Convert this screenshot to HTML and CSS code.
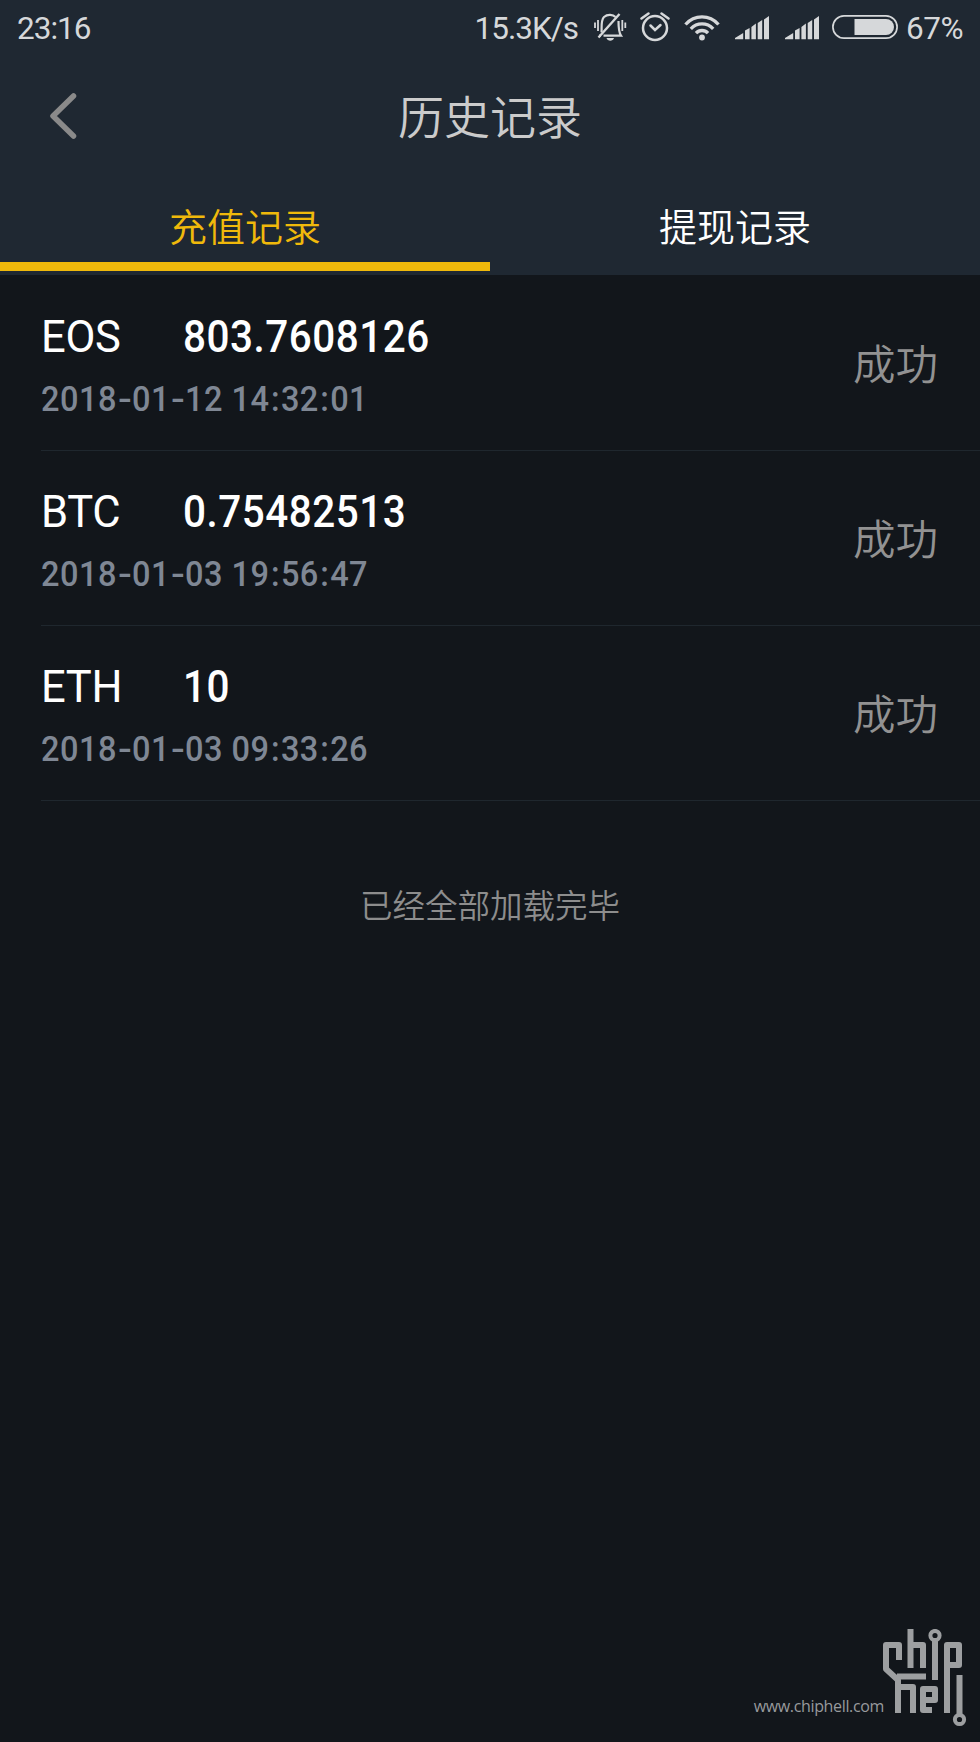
FILE: index.html
```html
<!DOCTYPE html>
<html lang="zh-CN">
<head>
<meta charset="utf-8">
<title>历史记录</title>
<link rel="stylesheet" href="styles.css">
</head>
<body>
<div class="screen">
  <header class="top">
    <div class="status">
      <span class="clock">23:16</span>
      <span class="speed">15.3K/s</span>
      <svg class="ic-bell" width="34" height="30" viewBox="0 0 34 30" fill="none" stroke="#d6d8da" stroke-width="2.200">
        <path d="M8.500 20.500C9 17 7.500 8.500 11 5C14.500 2 20 2.500 22.500 5"/>
        <path d="M25.500 9C25.500 15 25.500 20 28 23.600H10.500"/>
        <path d="M6 23.600H8"/>
        <path d="M5.500 25.500L26.500 2" stroke-width="2.400"/>
        <path d="M13.500 26H21C20 29.500 14.500 29.500 13.500 26Z" fill="#d6d8da" stroke="none"/>
        <path d="M2 10.500V16M5 8V19M29.300 8V19M32.300 10.500V16" stroke-width="1.800"/>
      </svg>
      <svg class="ic-alarm" width="30" height="30" viewBox="0 0 30 30" fill="none" stroke="#d6d8da" stroke-width="2.500" stroke-linecap="round">
        <circle cx="15" cy="16" r="12"/>
        <path d="M1.500 6.500L8.500 1.500M21.500 1.500L28.500 6.500"/>
        <path d="M10.500 13.500L15 18L20.500 13" stroke-width="2.500"/>
      </svg>
      <svg class="ic-wifi" width="36" height="28" viewBox="0 0 36 28" fill="none" stroke="#d6d8da" stroke-width="3.300">
        <path d="M1.500 10.500C10.500 .4 25.500 .4 34.500 10.500"/>
        <path d="M6.800 14.800C13 8.300 23 8.300 29.200 14.800"/>
        <path d="M12 19.200C15.300 15.600 20.700 15.600 24 19.200"/>
        <circle cx="18" cy="23.500" r="2.900" fill="#d6d8da" stroke="none"/>
      </svg>
      <svg class="ic-signal" width="35" height="24" viewBox="0 0 35 24" fill="#d6d8da">
        <path d="M0 23.200V22L8.200 17V23.200ZM10 23.200V14.500L14.600 12V23.200ZM16.400 23.200V11L20.900 7.500V23.200ZM22.700 23.200V7L27.200 4V23.200ZM29 23.200V3.500L34 0V23.200Z"/>
      </svg>
      <svg class="ic-signal" width="35" height="24" viewBox="0 0 35 24" fill="#d6d8da">
        <path d="M0 23.200V22L8.200 17V23.200ZM10 23.200V14.500L14.600 12V23.200ZM16.400 23.200V11L20.900 7.500V23.200ZM22.700 23.200V7L27.200 4V23.200ZM29 23.200V3.500L34 0V23.200Z"/>
      </svg>
      <svg class="ic-battery" width="66" height="24" viewBox="0 0 66 24">
        <rect x=".9" y=".9" width="64.200" height="22.200" rx="11.100" fill="none" stroke="#d6d8da" stroke-width="1.700"/>
        <path d="M22.500 4H54A8 8 0 0 1 54 20H22.500Z" fill="#d6d8da"/>
      </svg>
      <span class="percent">67%</span>
    </div>
    <div class="titlebar">
      <svg class="back" width="28" height="48" viewBox="0 0 28 48" fill="none" stroke="#8a8a8a" stroke-width="5.500" stroke-linecap="round" stroke-linejoin="round"><path d="M24.500 4L4 24L24.500 44"/></svg>
      <h1 class="title">历史记录</h1>
    </div>
    <nav class="tabs">
      <div class="tab active">充值记录</div>
      <div class="tab">提现记录</div>
    </nav>
  </header>
  <main class="list">
    <div class="row">
      <div class="info">
        <div class="line"><span class="coin">EOS</span><span class="amount">803.7608126</span></div>
        <div class="date">2018<i class="dash">-</i>01<i class="dash">-</i>12 14<i class="colon">:</i>32<i class="colon">:</i>01</div>
      </div>
      <div class="state">成功</div>
    </div>
    <div class="row">
      <div class="info">
        <div class="line"><span class="coin">BTC</span><span class="amount">0.75482513</span></div>
        <div class="date">2018<i class="dash">-</i>01<i class="dash">-</i>03 19<i class="colon">:</i>56<i class="colon">:</i>47</div>
      </div>
      <div class="state">成功</div>
    </div>
    <div class="row">
      <div class="info">
        <div class="line"><span class="coin">ETH</span><span class="amount">10</span></div>
        <div class="date">2018<i class="dash">-</i>01<i class="dash">-</i>03 09<i class="colon">:</i>33<i class="colon">:</i>26</div>
      </div>
      <div class="state">成功</div>
    </div>
    <p class="end">已经全部加载完毕</p>
  </main>
  <footer class="mark">
    <span class="site">www.chiphell.com</span>
    <svg class="logo" width="84" height="98" viewBox="0 0 84 98" fill="none" stroke="#9d9fa1" stroke-width="6" stroke-linejoin="round">
      <path d="M16 31V16H3V40L15 51V84"/>
      <path d="M14 47.500H43M15 58H30V84"/>
      <path d="M27.500 0V39M27.500 16H40V39"/>
      <circle cx="52" cy="6.500" r="4.600" stroke-width="4"/>
      <path d="M52 11V51"/>
      <path d="M64 84V16H76V36H64"/>
      <path d="M49 81H40V60H52V71H43"/>
      <path d="M76.500 46V85"/>
      <circle cx="76.500" cy="90.500" r="4.600" stroke-width="4"/>
    </svg>
  </footer>
</div>
</body>
</html>
```
FILE: styles.css
```css
* { box-sizing: border-box; }
body {
  margin: 0;
  background: #12161b;
  font-family: Roboto, "Noto Sans CJK SC", sans-serif;
}
.screen {
  width: 980px;
  height: 1742px;
  display: flex;
  flex-direction: column;
  overflow: hidden;
}
.top {
  height: 275px;
  background: #1f2832;
  flex: none;
}
.status {
  height: 56px;
  padding: 0 17px 0 17px;
  display: flex;
  align-items: center;
  font-size: 31.5px;
  line-height: 56px;
  color: #d6d8da;
}
.clock { margin-top: 2px; letter-spacing: -1px; }
.speed { margin: 2px 0 0 auto; letter-spacing: -1px; }
.ic-bell { margin: -2px 0 0 15px; }
.ic-alarm { margin: -2px 0 0 13px; }
.ic-wifi { margin: -1px 0 0 14px; }
.ic-signal { margin-left: 15px; }
.ic-battery { margin: -2px 0 0 12px; }
.percent { margin: 2px 0 0 8px; letter-spacing: -0.5px; }
.titlebar {
  height: 120px;
  display: grid;
  grid-template-columns: 120px 1fr 120px;
  align-items: center;
}
.back { margin-left: 49px; }
.title {
  margin: -4px 0 0;
  text-align: center;
  font-family: "Noto Sans CJK SC", sans-serif;
  font-weight: 350;
  font-size: 46px;
  line-height: 60px;
  color: #cbcbcb;
}
.tabs { display: flex; height: 95px; }
.tab {
  flex: 1;
  height: 95px;
  text-align: center;
  font: 350 38px/97px "Noto Sans CJK SC", sans-serif;
  color: #fff;
}
.tab.active {
  color: #f0b90b;
  border-bottom: 9px solid #f0b90b;
}
.list { flex: 1; padding-top: 1px; }
.row {
  height: 175px;
  margin-left: 41px;
  padding: 40px 42px 0 0;
  display: flex;
  justify-content: space-between;
  border-bottom: 1px solid #1f272e;
}
.line {
  display: flex;
  height: 44px;
  line-height: 44px;
  font-size: 43.5px;
  color: #fff;
}
.coin { width: 142px; letter-spacing: -0.3px; }
.amount {
  font-weight: 500;
  letter-spacing: 0.55px;
  transform: scaleX(0.93);
  transform-origin: left;
}
.date {
  margin-top: 20px;
  height: 40px;
  font-size: 35px;
  line-height: 40px;
  font-weight: 500;
  letter-spacing: 0.5px;
  color: #7f8794;
  white-space: pre;
  transform: scaleX(0.93);
  transform-origin: left;
}
.dash, .colon {
  display: inline-block;
  font-style: normal;
  text-align: center;
  letter-spacing: 0;
}
.dash { width: 16.3px; transform: scaleX(1.25); }
.colon { width: 12.2px; }
.state {
  height: 60px;
  margin-top: 16px;
  font: 350 42.5px/60px "Noto Sans CJK SC", sans-serif;
  color: #929292;
}
.end {
  margin: 79px 0 0;
  text-align: center;
  font: 350 32.5px/48px "Noto Sans CJK SC", sans-serif;
  color: #8d8d8d;
}
.mark {
  height: 113px;
  padding-right: 13px;
  display: flex;
  justify-content: flex-end;
  align-items: flex-start;
}
.site {
  margin-top: 67px;
  font: 400 16px/20px "Open Sans", sans-serif;
  letter-spacing: -0.35px;
  color: #989a9d;
}
.logo { margin-left: -1px; }
```
